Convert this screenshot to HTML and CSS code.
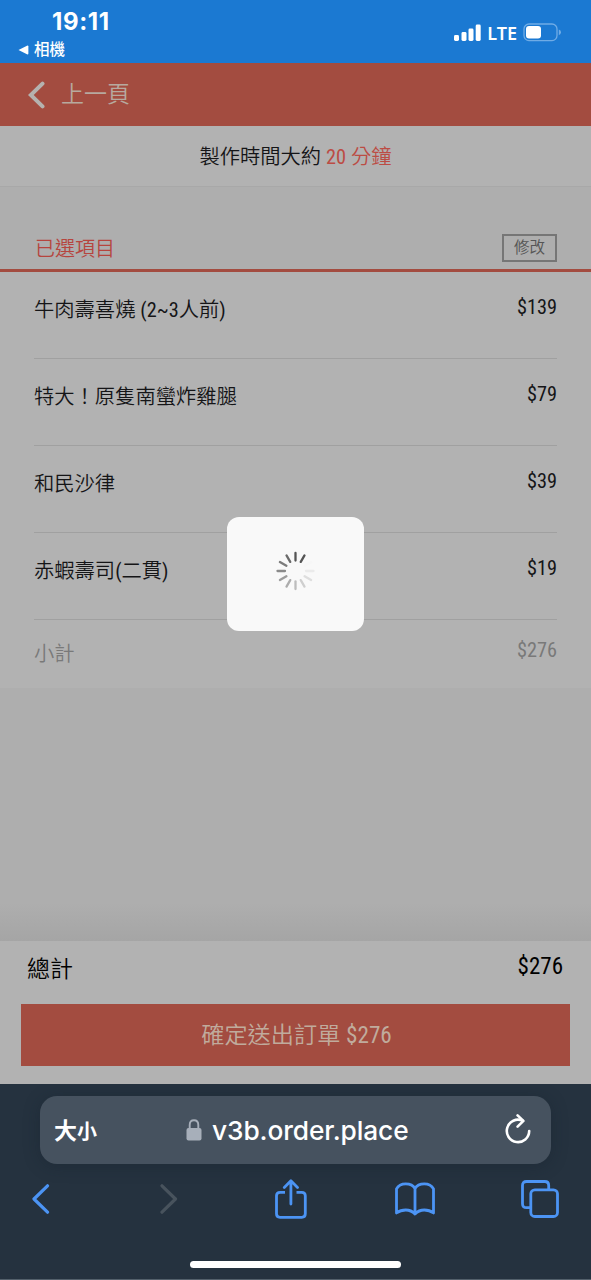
FILE: index.html
```
<!DOCTYPE html>
<html lang="zh-Hant">
<head>
<meta charset="utf-8">
<title>v3b.order.place</title>
<link rel="stylesheet" href="styles.css">
</head>
<body>
<div class="phone">
  <header class="status">
    <div class="status-left">
      <div class="clock">19:11</div>
      <div class="return-app"><svg width="11" height="10" viewBox="0 0 11 10"><path d="M0.5 5 9 .7Q10.4.3 10.4 1.6V8.4Q10.4 9.7 9 9.3Z" fill="#fff"/></svg><span>相機</span></div>
    </div>
    <div class="status-right">
      <svg width="28" height="18" viewBox="0 0 28 18" fill="#fff"><rect x="0" y="11" width="5" height="6" rx="1.4"/><rect x="7.5" y="8" width="5" height="9" rx="1.4"/><rect x="14.5" y="4.5" width="5" height="12.5" rx="1.4"/><rect x="21.7" y=".5" width="5" height="16.5" rx="1.4"/></svg>
      <span class="lte">LTE</span>
      <svg class="battery" width="39" height="19" viewBox="0 0 39 19"><rect x="1" y="1" width="33" height="16.6" rx="5" fill="none" stroke="#70ace6" stroke-width="1.3"/><rect x="3" y="3" width="15" height="12.6" rx="3" fill="#fff"/><path d="M35.8 6.5Q38 7.2 38 9.3T35.8 12.2Z" fill="#70ace6"/></svg>
    </div>
  </header>

  <nav class="back-bar">
    <svg width="17" height="28" viewBox="0 0 17 28" fill="none" stroke="#b5b2af" stroke-width="4" stroke-linecap="round"><path d="M14.5 2.6 2.8 14 14.5 25.4"/></svg>
    <span>上一頁</span>
  </nav>

  <main class="page">
    <div class="prep"><span>製作時間大約</span> <span class="prep-min"><span class="num">20</span> 分鐘</span></div>
    <section class="order">
      <div class="order-head"><h2>已選項目</h2><button class="edit">修改</button></div>
      <ul class="items">
        <li><span>牛肉壽喜燒 <span class="num">(2~3</span>人前<span class="num">)</span></span><span class="price">$139</span></li>
        <li><span>特大！原隻南蠻炸雞腿</span><span class="price">$79</span></li>
        <li><span>和民沙律</span><span class="price">$39</span></li>
        <li><span>赤蝦壽司<span class="num">(</span>二貫<span class="num">)</span></span><span class="price">$19</span></li>
      </ul>
      <div class="subtotal"><span>小計</span><span class="price">$276</span></div>
    </section>
    <div class="spacer"></div>
    <footer class="checkout">
      <div class="total"><span>總計</span><span class="price">$276</span></div>
      <button class="submit">確定送出訂單 <span class="num">$276</span></button>
    </footer>
    <div class="loading">
      <svg width="40" height="40" viewBox="-19.5 -20 40 40" stroke-width="2.3" stroke-linecap="round">
        <g stroke="#555"><path d="M0-18V-10.5"/><path d="M0-18V-10.5" transform="rotate(30)"/></g>
        <path d="M0-18V-10.5" transform="rotate(60)" stroke="#f7f7f7"/>
        <path d="M0-18V-10.5" transform="rotate(90)" stroke="#ebebeb"/>
        <path d="M0-18V-10.5" transform="rotate(120)" stroke="#dedede"/>
        <path d="M0-18V-10.5" transform="rotate(150)" stroke="#cfcfcf"/>
        <path d="M0-18V-10.5" transform="rotate(180)" stroke="#bdbdbd"/>
        <path d="M0-18V-10.5" transform="rotate(210)" stroke="#adadad"/>
        <path d="M0-18V-10.5" transform="rotate(240)" stroke="#9c9c9c"/>
        <path d="M0-18V-10.5" transform="rotate(270)" stroke="#8b8b8b"/>
        <path d="M0-18V-10.5" transform="rotate(300)" stroke="#7c7c7c"/>
        <path d="M0-18V-10.5" transform="rotate(330)" stroke="#6b6b6b"/>
      </svg>
    </div>
  </main>

  <div class="browser">
    <div class="address">
      <div class="text-size">大<small>小</small></div>
      <div class="domain">
        <svg width="16" height="22" viewBox="0 0 16 22"><rect x=".5" y="9" width="15" height="12.5" rx="2" fill="#a7afba"/><path d="M3.7 10V6Q3.7 1.3 8 1.3T12.3 6V10" fill="none" stroke="#a7afba" stroke-width="1.9"/></svg>
        <span>v3b.order.place</span>
      </div>
      <svg class="reload" width="26" height="30" viewBox="0 0 26 30" fill="none" stroke="#fff" stroke-width="2.6" stroke-linecap="round" stroke-linejoin="round"><path d="M24.2 17A11.2 11.2 0 1 1 17.6 6.7"/><path d="M12.6 1.4 18.4 6.9 12.6 12.7"/></svg>
    </div>
    <div class="tools">
      <svg width="18" height="30" viewBox="0 0 18 30" fill="none" stroke="#4c94f4" stroke-width="3.2" stroke-linecap="round" stroke-linejoin="round"><path d="M15.5 1.8 2 15 15.5 28.2"/></svg>
      <svg class="forward" width="18" height="30" viewBox="0 0 18 30" fill="none" stroke="#48535d" stroke-width="3.2" stroke-linecap="round" stroke-linejoin="round"><path d="M2 1.8 15.5 15 2 28.2"/></svg>
      <svg class="share" width="32" height="40" viewBox="0 0 32 40" fill="none" stroke="#4c94f4" stroke-width="2.8" stroke-linecap="round" stroke-linejoin="round"><path d="M10 13.3H5Q1.5 13.3 1.5 16.8V34.8Q1.5 38.3 5 38.3H26.8Q30.3 38.3 30.3 34.8V16.8Q30.3 13.3 26.8 13.3H21.5" stroke-linecap="butt"/><path d="M15.9 25V1.8M9.3 8.4 15.9 1.8 22.5 8.4"/></svg>
      <svg class="bookmarks" width="40" height="34" viewBox="0 0 40 34" fill="none" stroke="#4c94f4" stroke-width="2.8" stroke-linejoin="round"><path d="M20 6.5C18.2 3.2 14.6 1.8 10.7 1.8S3.2 3.6 1.5 6.8V31C4.2 29 7 28 10.7 28S17.5 29.3 20 32C22.5 29.3 25.6 28 29.3 28S35.8 29 38.5 31V6.8C36.8 3.6 33.2 1.8 29.3 1.8S21.8 3.2 20 6.5V32"/></svg>
      <svg class="tabs" width="38" height="38" viewBox="0 0 38 38" fill="none" stroke="#4c94f4" stroke-width="2.8"><path d="M9.8 27.7H5.5Q1.5 27.7 1.5 23.7V5.5Q1.5 1.5 5.5 1.5H23.7Q27.7 1.5 27.7 5.5V9.8"/><rect x="9.8" y="9.8" width="26.7" height="26.7" rx="4"/></svg>
    </div>
    <div class="home"></div>
  </div>
</div>
</body>
</html>
```
FILE: styles.css
```
* { box-sizing: border-box; }
body {
  margin: 0;
  font-family: "Roboto", "Noto Sans CJK TC", sans-serif;
  font-size: 20.3px;
  font-weight: 350;
  color: #151517;
}
svg { display: block; flex: none; }
h2, ul { margin: 0; padding: 0; list-style: none; }
button { font: inherit; border: 0; padding: 0; border-radius: 0; }

.phone { width: 591px; height: 1280px; display: flex; flex-direction: column; overflow: hidden; }

.status {
  height: 63px;
  flex: none;
  background: #1b79d2;
  color: #fff;
  display: flex;
  justify-content: space-between;
  padding: 0 29px 0 18px;
  font-family: "Inter", "Noto Sans CJK TC", sans-serif;
}
.clock { font-size: 24px; font-weight: 700; line-height: 28px; letter-spacing: .6px; padding: 8px 0 0 34px; }
.return-app { display: flex; align-items: center; gap: 5px; font-size: 15.5px; font-weight: 500; line-height: 27px; }
.status-right { display: flex; align-items: center; height: 65px; }
.lte { font: 600 18px/24px "Noto Sans", sans-serif; margin: 0 6px 0 5px; }

.back-bar {
  height: 63px;
  flex: none;
  background: #a34c40;
  color: #b7a99f;
  display: flex;
  align-items: center;
  gap: 17px;
  padding-left: 28px;
  font-size: 23px;
  font-weight: 330;
}
.back-bar span { margin: -5px 0 0 -1px; }

.page { position: relative; height: 958px; flex: none; display: flex; flex-direction: column; background: #aeaeae; }
.prep {
  height: 61px;
  background: #b2b2b2;
  border-bottom: 1px solid #a8a8a8;
  text-align: center;
  line-height: 63px;
  white-space: pre;
}
.prep-min { color: #bc4c44; }
.num, .price { font-stretch: 75%; font-family: "Roboto Condensed", "Roboto", sans-serif; font-weight: 370; }

.order-head {
  height: 85px;
  padding: 44px 34px 0 35px;
  border-bottom: 3px solid #a34c40;
  display: flex;
  justify-content: space-between;
}
.order-head h2 { font-size: 20px; font-weight: 350; line-height: 37px; color: #b6453e; }
.edit {
  width: 55px;
  height: 28px;
  margin-top: 3px;
  border: 2px solid #767676;
  background: none;
  color: #555;
  font-size: 15.5px;
  line-height: 22px;
}
.items { padding: 0 34px; background: #b2b2b2; }
.items li {
  height: 87px;
  border-bottom: 1px solid #a0a0a0;
  display: flex;
  justify-content: space-between;
  line-height: 30px;
  padding-top: 23px;
}
.items .price, .subtotal .price { margin-top: -3px; }
.subtotal {
  height: 68px;
  background: #b2b2b2;
  padding: 19px 34px 0;
  color: #797979;
  display: flex;
  justify-content: space-between;
  line-height: 30px;
}
.subtotal .price { margin-top: -4px; }
.spacer { flex: 1; background: linear-gradient(#aeaeae 85%, #a5a5a5); }

.checkout { height: 143px; background: #b2b2b2; padding: 0 21px; color: #000; }
.total {
  height: 63px;
  padding: 13px 7px 0 6px;
  display: flex;
  justify-content: space-between;
  font-size: 23px;
  line-height: 32px;
}
.total .price { margin-top: -3px; }
.submit { display: block; width: 100%; height: 62px; background: #a34c40; color: #c0ab9d; font-size: 23.2px; padding: 0 0 4px 2px; }

.loading {
  position: absolute;
  left: 227px;
  top: 391px;
  width: 137px;
  height: 114px;
  border-radius: 12px;
  background: #f9f9f9;
  display: flex;
  justify-content: center;
  padding-top: 34px;
}

.browser { flex: 1; background: #25323f; padding: 12px 0 0; border-bottom: 1px solid #53606b; }
.address {
  height: 68px;
  margin: 0 40px;
  padding: 0 20px 0 14px;
  border-radius: 17px;
  background: #46525f;
  box-shadow: 0 2px 16px rgba(20, 32, 44, .35);
  color: #fff;
  display: flex;
  align-items: center;
  font-family: "Inter", "Noto Sans CJK TC", sans-serif;
}
.text-size { width: 132px; font-size: 23px; font-weight: 700; white-space: nowrap; line-height: 28px; margin-top: 2px; }
.text-size small { font-size: 20px; }
.domain { display: flex; align-items: center; gap: 10px; font-size: 26.3px; font-weight: 550; letter-spacing: -.1px; }
.reload { margin: -3px 0 0 auto; }
.tools { display: flex; align-items: center; height: 70px; padding: 0 32px; }
.forward { margin-left: 110px; }
.share { margin-left: 97px; }
.bookmarks { margin-left: 88px; }
.tabs { margin-left: auto; }
.home { width: 211px; height: 7px; margin: 27px auto 0; border-radius: 4px; background: #fff; }
```
